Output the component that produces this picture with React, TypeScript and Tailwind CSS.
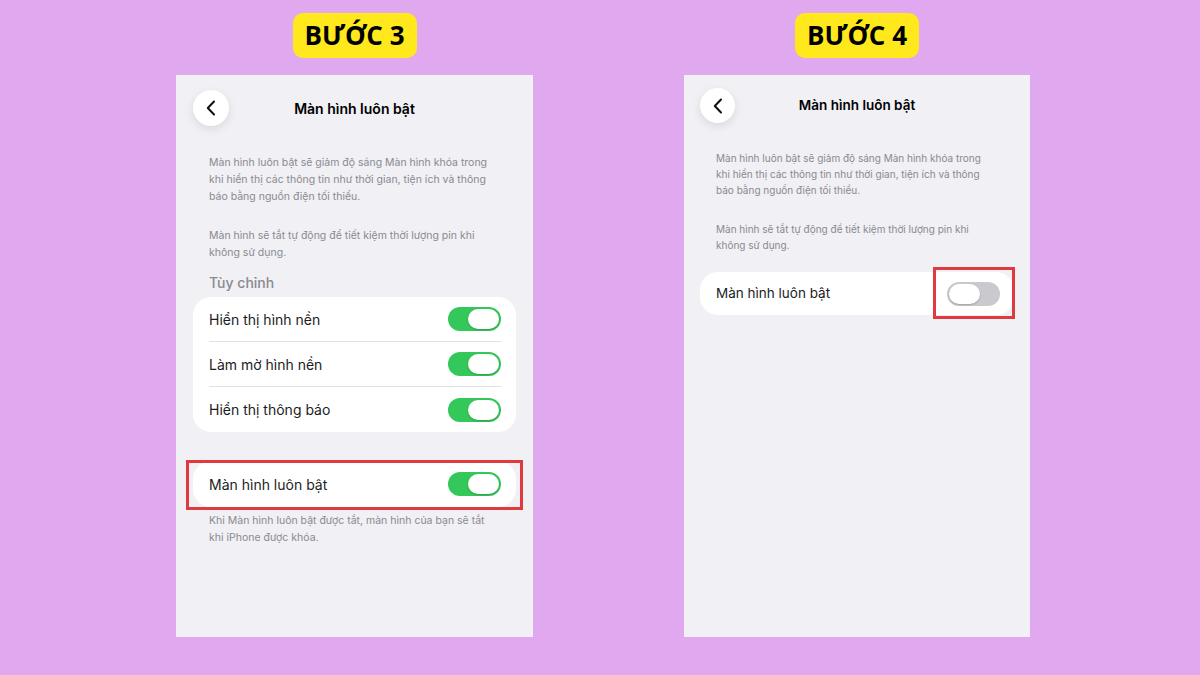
import { ReactNode } from "react";

const ios = { fontFamily: "Inter, 'Noto Sans', sans-serif" };

function BackButton({ size }: { size: number }) {
  return (
    <div
      className="flex shrink-0 items-center justify-center rounded-full bg-white shadow-[0_3px_10px_rgba(0,0,0,0.10)]"
      style={{ width: size, height: size }}
    >
      <svg width="10" height="16" viewBox="0 0 10 16" fill="none">
        <path d="M8 1.5 1.8 8 8 14.5" stroke="#111" strokeWidth="2" strokeLinecap="round" strokeLinejoin="round" />
      </svg>
    </div>
  );
}

function Toggle({ on }: { on: boolean }) {
  return (
    <div
      className={`flex h-[24px] w-[53px] items-center rounded-full px-[2px] ${
        on ? "justify-end bg-[#34c759]" : "justify-start bg-[#c9c9ce]"
      }`}
    >
      <div className="h-[20px] w-[31px] rounded-full bg-white shadow-[0_1px_2px_rgba(0,0,0,0.2)]" />
    </div>
  );
}

function Badge({ children }: { children: ReactNode }) {
  return (
    <div
      className="flex h-[45px] w-[124px] items-center justify-center rounded-[10px] bg-[#ffe81c] text-[26px] font-bold text-black"
      style={{ fontFamily: "'Open Sans', sans-serif" }}
    >
      {children}
    </div>
  );
}

function Row({ label, last }: { label: string; last?: boolean }) {
  return (
    <div className="pl-4 pr-[15px]">
      <div className={`flex h-[45px] items-center justify-between ${last ? "" : "border-b border-[#e2e2e6]"}`}>
        <span className="text-[14px] text-[#1c1c1e]">{label}</span>
        <Toggle on />
      </div>
    </div>
  );
}

function StepThree() {
  return (
    <div className="flex w-[357px] flex-col items-center">
      <Badge>BƯỚC 3</Badge>
      <div className="mt-[17px] flex h-[562px] w-full flex-col bg-[#f0f0f5] px-[17px] pt-[15px]" style={ios}>
        <div className="flex items-center">
          <BackButton size={36} />
          <div className="flex-1 text-center text-[14px] font-semibold text-black">Màn hình luôn bật</div>
          <div className="w-[36px]" />
        </div>

        <p className="mt-[28px] px-4 text-[10.5px] leading-[17px] text-[#8a8a8f]">
          Màn hình luôn bật sẽ giảm độ sáng Màn hình khóa trong
          <br />
          khi hiển thị các thông tin như thời gian, tiện ích và thông
          <br />
          báo bằng nguồn điện tối thiểu.
        </p>
        <p className="mt-[22px] px-4 text-[10.5px] leading-[17px] text-[#8a8a8f]">
          Màn hình sẽ tắt tự động để tiết kiệm thời lượng pin khi
          <br />
          không sử dụng.
        </p>

        <div className="mt-[12px] px-4 text-[14px] font-medium leading-[20px] text-[#8a8a8f]">Tùy chỉnh</div>

        <div className="mt-[4px] rounded-[18px] bg-white">
          <Row label="Hiển thị hình nền" />
          <Row label="Làm mờ hình nền" />
          <Row label="Hiển thị thông báo" last />
        </div>

        <div className="relative mt-[29px] flex h-[46px] items-center justify-between rounded-[18px] bg-white pl-4 pr-[15px]">
          <span className="text-[14px] text-[#1c1c1e]">Màn hình luôn bật</span>
          <Toggle on />
          {/* red highlight frame */}
          <div className="absolute -bottom-[3px] -left-[7px] -right-[7px] -top-[1px] border-[3px] border-[#e03a3e]" />
        </div>

        <p className="mt-[5px] px-4 text-[10.5px] leading-[17px] text-[#8a8a8f]">
          Khi Màn hình luôn bật được tắt, màn hình của bạn sẽ tắt
          <br />
          khi iPhone được khóa.
        </p>
      </div>
    </div>
  );
}

function StepFour() {
  return (
    <div className="flex w-[346px] flex-col items-center">
      <Badge>BƯỚC 4</Badge>
      <div className="mt-[17px] flex h-[562px] w-full flex-col bg-[#f0f0f5] px-[16px] pt-[13px]" style={ios}>
        <div className="flex items-center">
          <BackButton size={35} />
          <div className="flex-1 text-center text-[13.5px] font-semibold text-black">Màn hình luôn bật</div>
          <div className="w-[35px]" />
        </div>

        <p className="mt-[27px] px-4 text-[10px] leading-[16px] text-[#8a8a8f]">
          Màn hình luôn bật sẽ giảm độ sáng Màn hình khóa trong
          <br />
          khi hiển thị các thông tin như thời gian, tiện ích và thông
          <br />
          báo bằng nguồn điện tối thiểu.
        </p>
        <p className="mt-[23px] px-4 text-[10px] leading-[16px] text-[#8a8a8f]">
          Màn hình sẽ tắt tự động để tiết kiệm thời lượng pin khi
          <br />
          không sử dụng.
        </p>

        <div className="mt-[19px] flex h-[43px] items-center justify-between rounded-[18px] bg-white pl-4 pr-[14px]">
          <span className="text-[13.5px] text-[#1c1c1e]">Màn hình luôn bật</span>
          <div className="relative">
            <Toggle on={false} />
            {/* red highlight frame */}
            <div className="absolute -bottom-[13px] -left-[14px] -right-[15px] -top-[15px] border-[3px] border-[#e03a3e]" />
          </div>
        </div>
      </div>
    </div>
  );
}

export default function App() {
  return (
    <div className="flex h-[675px] w-[1200px] items-start bg-[#e0a8ef] pl-[176px] pt-[13px]">
      <StepThree />
      <div className="w-[151px]" />
      <StepFour />
    </div>
  );
}
